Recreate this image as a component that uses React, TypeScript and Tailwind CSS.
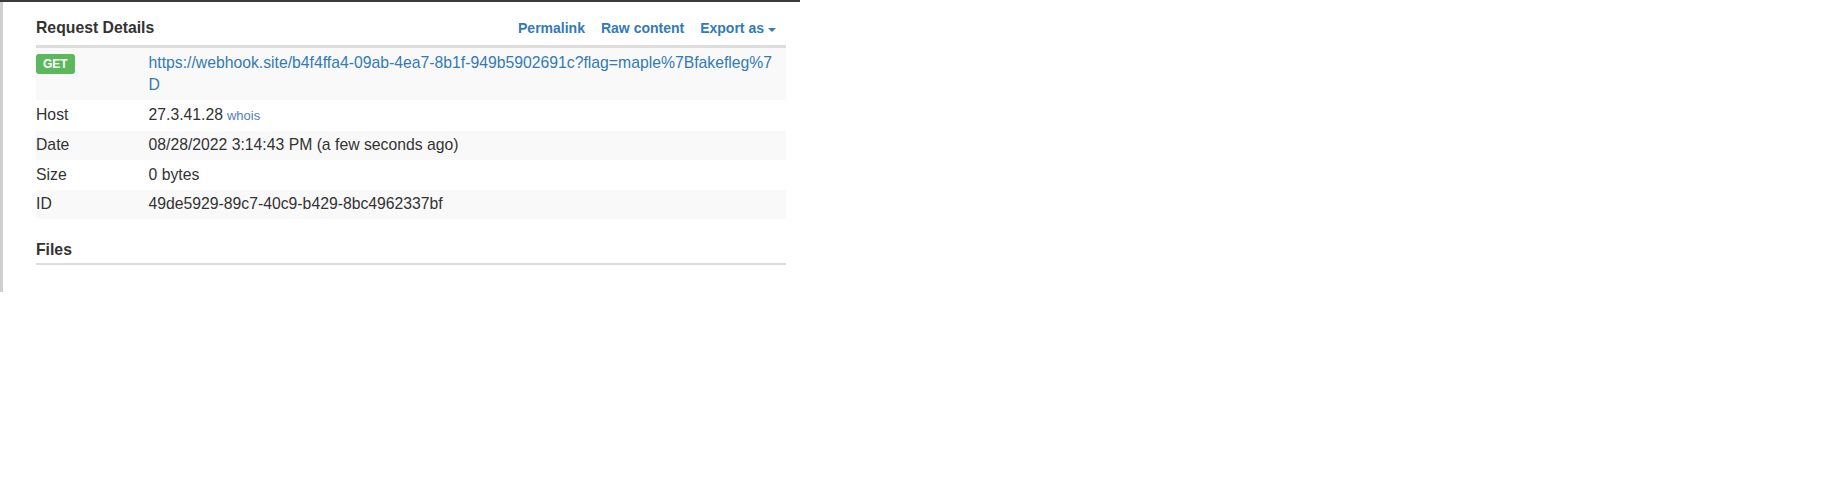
import React from "react";

const rows = [
  { label: "Host", value: "27.3.41.28", whois: true },
  { label: "Date", value: "08/28/2022 3:14:43 PM (a few seconds ago)" },
  { label: "Size", value: "0 bytes" },
  { label: "ID", value: "49de5929-89c7-40c9-b429-8bc4962337bf" },
];

const url =
  "https://webhook.site/b4f4ffa4-09ab-4ea7-8b1f-949b5902691c?flag=maple%7Bfakefleg%7D";

const App: React.FC = () => {
  return (
    <div className="w-[1846px] h-[504px] bg-white font-['Liberation_Sans',Arial,sans-serif] text-[#333]">
      <div className="w-[800px] border-t-2 border-[#3a3a3a]">
        <div className="h-[290px] border-l-[3px] border-[#cfcfcf] pl-[33px] pr-[14px] pt-[15px]">
          {/* header */}
          <div className="flex items-baseline justify-between pb-[5.5px]">
            <h4 className="text-[15.75px] font-bold leading-[22.5px]">Request Details</h4>
            <div className="mr-[10px] flex items-baseline gap-[16px] text-[14px] font-bold text-[#337ab7]">
              <span className="cursor-pointer">Permalink</span>
              <span className="cursor-pointer">Raw content</span>
              <span className="flex cursor-pointer items-center">
                Export as
                <span className="ml-[4px] mt-[2px] h-0 w-0 border-x-[4.5px] border-t-[4.5px] border-x-transparent border-t-[#337ab7]" />
              </span>
            </div>
          </div>

          {/* details table */}
          <table className="w-full border-collapse border-t-[3px] border-[#ddd] text-[15.75px] leading-[22.5px]">
            <tbody>
              <tr className="bg-[#f9f9f9]">
                <td className="w-[15%] py-[3.5px] align-top">
                  <span className="inline-block rounded-[3px] bg-[#5cb85c] px-[7px] pt-[3.5px] pb-[4px] text-[12px] font-bold leading-none text-white">
                    GET
                  </span>
                </td>
                <td className="py-[3.5px] pr-[8px] align-top break-all">
                  <a className="text-[#337ab7]">{url}</a>
                </td>
              </tr>
              {rows.map((row, i) => (
                <tr key={row.label} className={i % 2 === 1 ? "bg-[#f9f9f9]" : ""}>
                  <td className="w-[15%] py-[3.5px] align-top">{row.label}</td>
                  <td className="py-[3.5px] align-top">
                    {row.value}
                    {row.whois && (
                      <a className="ml-[4px] text-[13px] text-[#4f7cc0]">whois</a>
                    )}
                  </td>
                </tr>
              ))}
            </tbody>
          </table>

          {/* files */}
          <h4 className="mt-[19.5px] border-b-2 border-[#ddd] pb-[2px] text-[15.75px] font-bold leading-[22.5px]">
            Files
          </h4>
        </div>
      </div>
    </div>
  );
};

export default App;
